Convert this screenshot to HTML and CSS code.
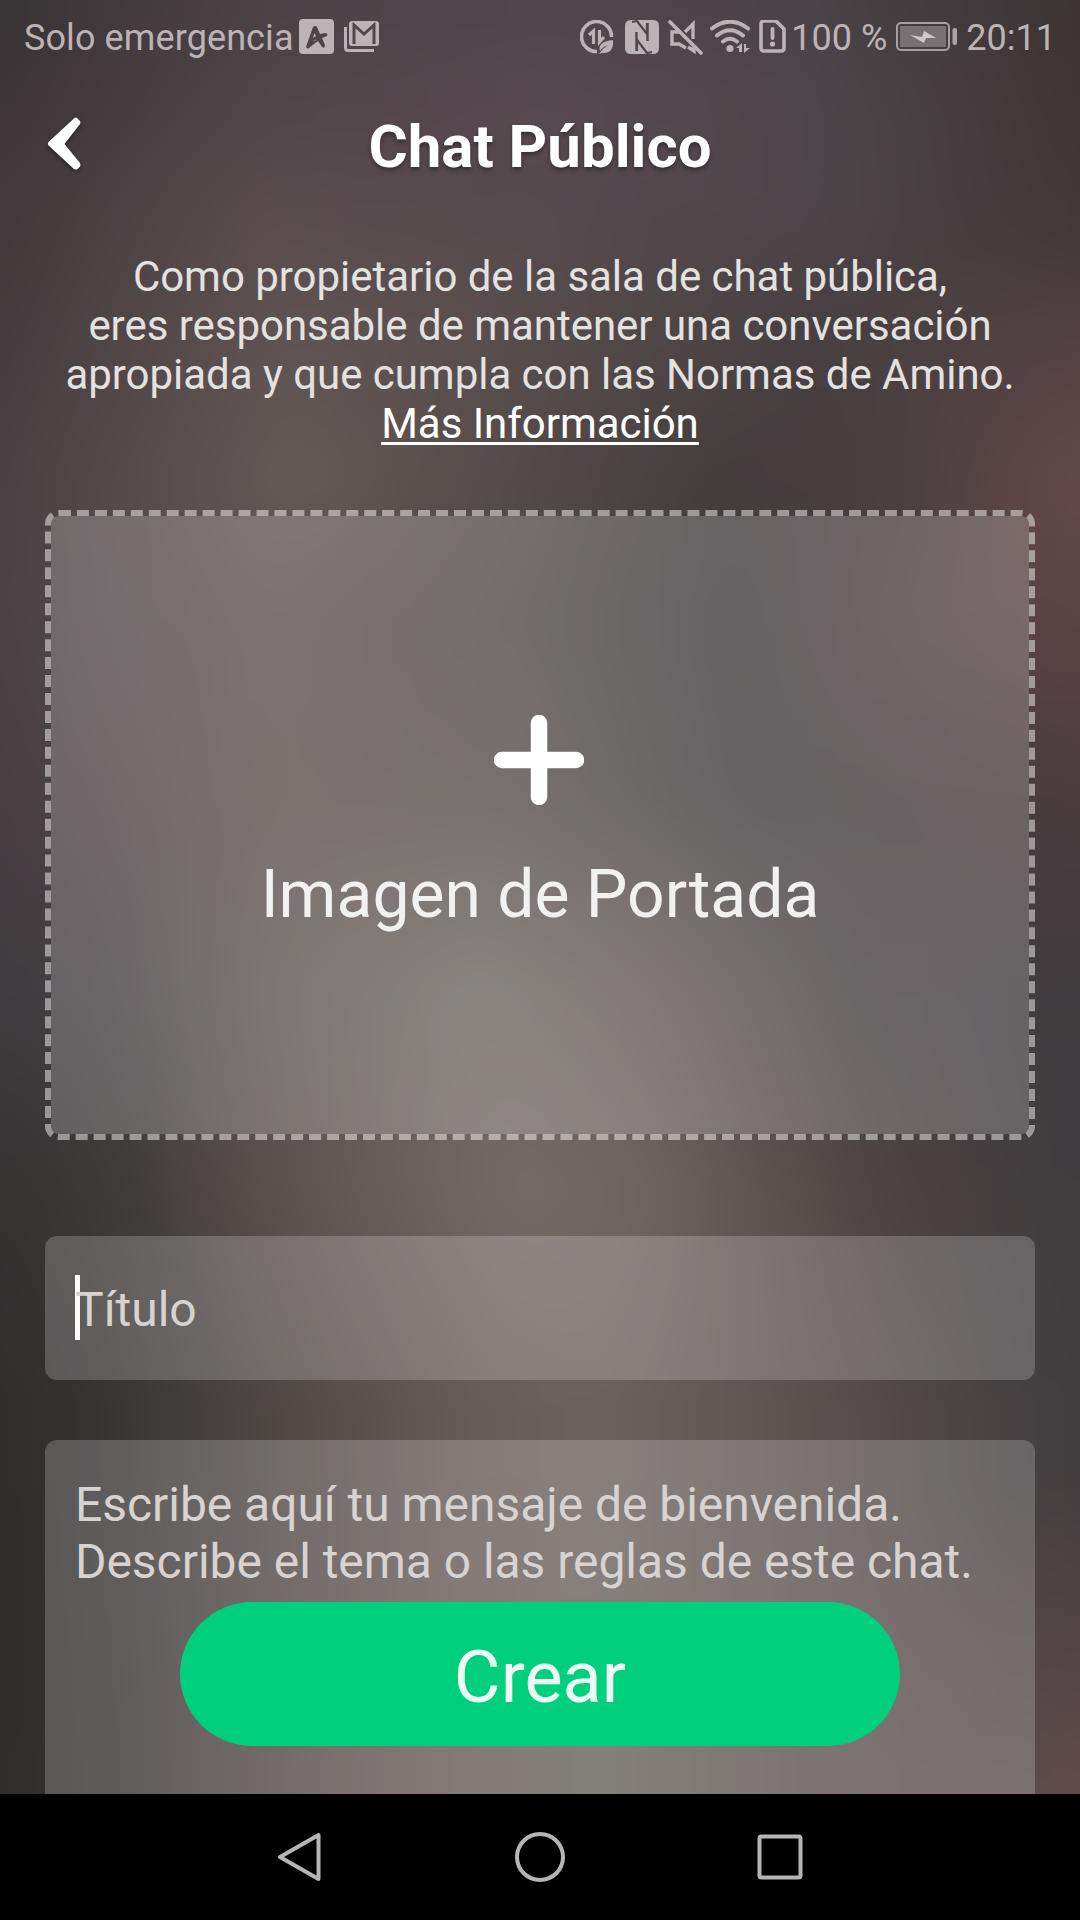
FILE: index.html
```html
<!DOCTYPE html>
<html lang="es">
<head>
<meta charset="utf-8">
<title>Chat Público</title>
<link rel="stylesheet" href="styles.css">
</head>
<body>
<div class="screen">
  <div class="backdrop">
    <i class="tone tone-1"></i><i class="tone tone-2"></i><i class="tone tone-3"></i>
    <i class="tone tone-4"></i><i class="tone tone-5"></i><i class="tone tone-6"></i>
    <i class="tone tone-7"></i><i class="tone tone-8"></i><i class="tone tone-9"></i>
    <i class="tone tone-10"></i><i class="tone tone-11"></i>
  </div>
  <div class="status">
    <span class="carrier">Solo emergencia</span>
    <svg class="app-icon" width="35" height="35" viewBox="0 0 35 35"><path fill="#bcb3b6" fill-rule="evenodd" d="M4 0H31Q35 0 35 4V31Q35 35 31 35H4Q0 35 0 31V4Q0 0 4 0ZM14 8 7 28Q9 31 11 28L19 22 23 28Q26 30 26 26L23 19 28 17Q29 14 26 14L21 15 18 8Q16 6 14 8ZM15.500 14 17 17 14 19ZM13 22.500 17 20.500 18 21Z"/></svg>
    <svg class="mail-icon" width="35" height="32" viewBox="0 0 35 32"><path fill="#bcb3b6" d="M8 0H32Q35 0 35 3V22Q35 25 32 25H8Q5 25 5 22V3Q5 0 8 0Z"/><path d="M10 23V4L20 13 30 4V23" fill="none" stroke="#51464a" stroke-width="3"/><path d="M1.500 6V27Q1.500 29.500 4 29.500H30" fill="none" stroke="#bcb3b6" stroke-width="3"/></svg>
    <div class="indicators">
      <svg class="saver" width="34" height="34" viewBox="0 0 34 34"><path d="M31.500 17A15 15 0 1 0 17 31.500" fill="none" stroke="#bcb3b6" stroke-width="3.600"/><path d="M9 15 13.500 11V24M19.500 10V22L24 17" fill="none" stroke="#bcb3b6" stroke-width="3.200"/><path d="M20 31Q17 22 33 20Q34 34 22 33L19 34Q23 28 28 25Q22 27 20 31Z" fill="#bcb3b6"/></svg>
      <svg class="nfc" width="34" height="34" viewBox="0 0 34 34"><path d="M6 0H28Q34 0 34 6V28Q34 34 28 34H6Q0 34 0 28V6Q0 0 6 0Z" fill="#bcb3b6"/><path d="M7 2 12 1 22 14V3M27 32 22 33 12 20V31" fill="none" stroke="#51464a" stroke-width="2.200" stroke-linejoin="round"/><path d="M11.500 12V31M22.500 3V21" stroke="#51464a" stroke-width="2.400"/></svg>
      <svg class="mute" width="36" height="36" viewBox="0 0 36 36"><path d="M17 12 25 4V19M20 27 26 31V27M13 12H4V24H11L18 28" fill="none" stroke="#bcb3b6" stroke-width="3.400"/><path d="M2 2 33 33" stroke="#bcb3b6" stroke-width="3.600" stroke-linecap="round"/></svg>
      <svg class="wifi" width="42" height="34" viewBox="0 0 42 34"><g fill="none" stroke="#bcb3b6" stroke-width="4" stroke-linecap="round"><path d="M2 8.500Q20-5 38 8.500M7 15.500Q20 5 33 15.500M13 21.500Q20 16 27 21.500"/></g><circle cx="20" cy="28.500" r="3.600" fill="#bcb3b6"/><path d="M26 28 32 23V32H29V28ZM34 24H36V28H40L34 33Z" fill="#bcb3b6"/></svg>
      <svg class="sim" width="28" height="34" viewBox="0 0 28 34"><path d="M5 1H17L25 9V28Q25 31 22 31H5Q2 31 2 28V4Q2 1 5 1Z" fill="none" stroke="#bcb3b6" stroke-width="3.600"/><path d="M13.500 9V18" stroke="#bcb3b6" stroke-width="3.800" stroke-linecap="round"/><circle cx="13.500" cy="24" r="2.600" fill="#bcb3b6"/></svg>
      <span class="percent">100 %</span>
      <svg class="battery" width="62" height="30" viewBox="0 0 62 30"><rect x="1" y="1" width="52" height="27" rx="4" fill="none" stroke="#a79fa1" stroke-width="2"/><rect x="4" y="4" width="46" height="21" fill="#777173"/><path d="M14 13 26 15 28 9 40 16 30 16 28 21Z" fill="#cdc7c8"/><rect x="56.500" y="6" width="4.500" height="17" rx="2" fill="#aaa2a4"/></svg>
      <span class="clock">20:11</span>
    </div>
  </div>
  <header class="header">
    <svg class="back" width="38" height="60" viewBox="0 0 38 60"><path d="M27.500 4Q29 3 30.500 4.500L33 7Q34 8.500 33 10L17.500 30 33 49Q34 51 33 52.500L30.500 55Q29 56 27 55L1.500 31.500Q0 30 1.500 28Z" fill="#fff"/></svg>
    <h1 class="title">Chat Público</h1>
  </header>
  <p class="notice">Como propietario de la sala de chat pública,<br>eres responsable de mantener una conversación<br>apropiada y que cumpla con las Normas de Amino.<br><a class="more">Más Información</a></p>
  <div class="cover">
    <svg class="plus" width="90" height="90" viewBox="0 0 90 90"><path d="M45 8V82M8 45H82" stroke="#fff" stroke-width="16.500" stroke-linecap="round"/></svg>
    <span class="cover-label">Imagen de Portada</span>
  </div>
  <div class="field"><span class="caret"></span><span class="hint">Título</span></div>
  <div class="message">
    <p class="hint-text">Escribe aquí tu mensaje de bienvenida.<br>Describe el tema o las reglas de este chat.</p>
    <div class="create">Crear</div>
  </div>
  <nav class="nav">
    <svg width="50" height="54" viewBox="0 0 50 54"><path d="M43.500 5V49L5 27Z" fill="none" stroke="#b5b5b5" stroke-width="4" stroke-linejoin="round"/></svg>
    <svg width="50" height="54" viewBox="0 0 50 54"><circle cx="25" cy="27" r="23" fill="none" stroke="#b5b5b5" stroke-width="4"/></svg>
    <svg width="50" height="54" viewBox="0 0 50 54"><rect x="4.500" y="6.500" width="41" height="41" rx="2" fill="none" stroke="#b5b5b5" stroke-width="4"/></svg>
  </nav>
</div>
</body>
</html>
```
FILE: styles.css
```css
* { box-sizing: border-box; }
body { margin: 0; background: #000; font-family: Roboto, sans-serif; }
.screen { position: relative; isolation: isolate; width: 1080px; height: 1920px; display: flex; flex-direction: column; overflow: hidden; }

/* Soft backdrop: horizontal colour bands that fade into each other, then blurred.
   It overscans the screen by 60px so the blur has no visible edge. */
.backdrop { position: absolute; inset: -60px; z-index: -1; filter: blur(24px); }
.tone { position: absolute; inset: 0; mask-image: linear-gradient(transparent var(--from), #000 var(--to)); }
.tone-1 { mask-image: none; background: linear-gradient(90deg, #393435 60px, #4b4246 330px, #51464c 600px, #4a4347 860px, #3c3435 1130px); }
.tone-2 { --from: 60px; --to: 170px; background: linear-gradient(90deg, #3d3538 60px, #52464a 330px, #584950 600px, #4e474b 860px, #3f3637 1130px); }
.tone-3 { --from: 170px; --to: 270px; background: linear-gradient(90deg, #41393b 60px, #5a4c4f 320px, #554a4e 600px, #4e464a 860px, #403839 1130px); }
.tone-4 { --from: 270px; --to: 410px; background: linear-gradient(90deg, #463c3f 60px, #615454 350px, #574c4c 600px, #463f41 860px, #554244 1130px); }
.tone-5 { --from: 410px; --to: 540px; background: linear-gradient(90deg, #4a4043 60px, #655a57 350px, #514a48 600px, #443d3e 780px, #4a3f41 960px, #644947 1130px); }
.tone-6 { --from: 540px; --to: 680px; background: linear-gradient(90deg, #4a4145 70px, #50474a 130px, #5c5150 330px, #4e4746 600px, #403b3d 800px, #584446 1050px, #5c4345 1130px); }
.tone-7 { --from: 680px; --to: 860px; background: linear-gradient(90deg, #483f43 70px, #4e4346 160px, #5b504d 330px, #554e4c 570px, #403b3d 820px, #473b3e 1060px, #4a3c3f 1130px); }
.tone-8 { --from: 860px; --to: 1060px; background: linear-gradient(90deg, #403c3f 70px, #453e41 160px, #5c5552 330px, #6e6863 540px, #635956 710px, #474042 910px, #413c3f 1120px); }
.tone-9 { --from: 1060px; --to: 1250px; background: linear-gradient(90deg, #353232 60px, #403c3b 195px, #584e4b 310px, #665b58 420px, #756b68 580px, #6e6460 710px, #584e4b 860px, #4b4141 960px, #423d3f 1110px); }
.tone-10 { --from: 1250px; --to: 1470px; background: linear-gradient(90deg, #2f2e2d 70px, #363433 160px, #4e4744 330px, #685c58 540px, #6b615d 660px, #5b514f 870px, #474142 1060px, #433e40 1130px); }
.tone-11 { --from: 1530px; --to: 1830px; background: linear-gradient(90deg, #302e2d 70px, #353130 160px, #504645 330px, #635754 480px, #656059 660px, #5c5250 860px, #5a4b4b 1060px, #5f4a4a 1130px); }

.status { height: 76px; display: flex; align-items: flex-start; padding: 0 24px; color: #bcb3b6; font-size: 36px; line-height: 42px; }
.carrier { width: 275px; margin-top: 17px; letter-spacing: .1px; white-space: nowrap; }
.app-icon { margin-top: 19px; }
.mail-icon { margin: 21px 0 0 10px; }
.indicators { margin-left: auto; display: flex; align-items: flex-start; padding-top: 20px; }
.saver { margin-right: 11px; }
.nfc { margin-right: 9px; }
.mute { margin-right: 6px; }
.wifi { margin-right: 7px; }
.sim { margin-right: 4px; }
.percent, .clock { margin-top: -3px; white-space: nowrap; }
.battery { margin: 2px 8px 0 9px; }
.header { height: 140px; display: grid; grid-template-columns: 46px 1fr 46px; padding: 38px 46px 0; }
.back { margin-left: 1px; filter: drop-shadow(0 2px 2px rgba(0,0,0,.4)); }
.title { margin: -2px 0 0; text-align: center; color: #fff; font-size: 60px; line-height: 70px; font-weight: 700; text-shadow: 0 3px 4px rgba(0,0,0,.35); }
.notice { margin: 36px 0 0; height: 222px; text-align: center; color: #e4e1e1; font-size: 42px; line-height: 49px; letter-spacing: -.03px; white-space: nowrap; }
.more { color: #fff; text-decoration: underline; text-decoration-thickness: 3px; text-underline-offset: 4px; }
.cover {
  margin: 36px 45px 0; height: 630px; flex: none; border: 6px dashed rgba(255,255,255,.48); border-radius: 14px;
  background: rgba(255,255,255,.2); background-clip: padding-box;
  display: flex; flex-direction: column; align-items: center; padding-top: 199px;
}
.plus { margin-right: 2px; }
.cover-label { margin-top: 51px; font-size: 66px; line-height: 78px; color: #f2f1f1; }
.field { margin: 96px 45px 0; height: 144px; flex: none; border-radius: 12px; background: rgba(255,255,255,.2); display: flex; align-items: center; padding: 0 0 1px 30px; }
.caret { width: 5px; height: 65px; background: #fff; margin-right: -5px; }
.hint { font-size: 48px; color: #d6d3d2; padding-top: 3px; }
.message { margin: 60px 45px 0; height: 354px; flex: none; border-radius: 12px 12px 0 0; background: rgba(255,255,255,.2); padding: 36px 30px 0; }
.hint-text { margin: 0; height: 126px; font-size: 48px; line-height: 57px; letter-spacing: -.04px; color: #d6d3d2; white-space: nowrap; }
.create { width: 720px; height: 144px; margin: 0 auto; border-radius: 72px; background: #00d07e; color: #edf9f3; font-size: 72px; line-height: 151px; text-align: center; }
.nav { height: 126px; flex: none; background: #000; display: flex; justify-content: center; align-items: center; gap: 190px; }
```
